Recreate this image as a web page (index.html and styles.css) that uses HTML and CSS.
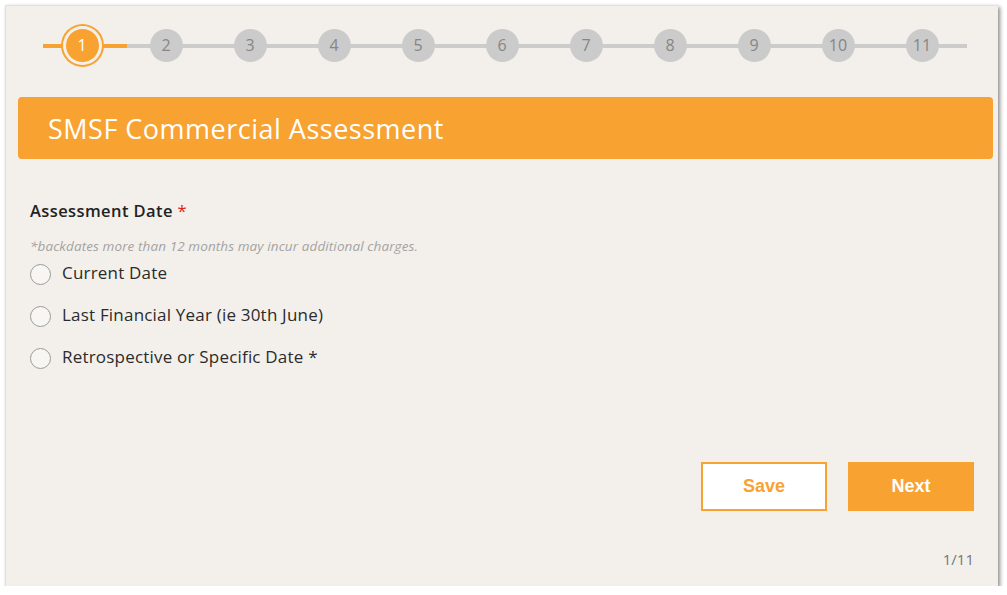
FILE: index.html
```html
<!DOCTYPE html>
<html>
<head>
<meta charset="utf-8">
<link rel="stylesheet" href="styles.css">
</head>
<body>
<div class="card">
  <div class="stepper">
    <div class="step active"><span class="dot">1</span></div>
    <div class="step"><span class="dot">2</span></div>
    <div class="step"><span class="dot">3</span></div>
    <div class="step"><span class="dot">4</span></div>
    <div class="step"><span class="dot">5</span></div>
    <div class="step"><span class="dot">6</span></div>
    <div class="step"><span class="dot">7</span></div>
    <div class="step"><span class="dot">8</span></div>
    <div class="step"><span class="dot">9</span></div>
    <div class="step"><span class="dot">10</span></div>
    <div class="step"><span class="dot">11</span></div>
  </div>
  <div class="banner"><h1>SMSF Commercial Assessment</h1></div>
  <div class="form">
    <div class="label">Assessment Date <span class="req">*</span></div>
    <div class="hint">*backdates more than 12 months may incur additional charges.</div>
    <div class="options">
      <label class="option"><span class="radio"></span>Current Date</label>
      <label class="option"><span class="radio"></span>Last Financial Year (ie 30th June)</label>
      <label class="option"><span class="radio"></span>Retrospective or Specific Date *</label>
    </div>
  </div>
  <div class="actions">
    <button class="btn save">Save</button>
    <button class="btn next">Next</button>
  </div>
  <div class="pager">1/11</div>
</div>
</body>
</html>
```
FILE: styles.css
```css
html, body { margin: 0; padding: 0; background: #ffffff; }
body { font-family: "Open Sans", "Liberation Sans", sans-serif; }
.card {
  margin: 5px 0 0 5px;
  width: 993px;
  height: 581px;
  background: #f3f0eb;
  box-shadow: 2px 2px 4px rgba(0,0,0,0.45);
  border-top: 1px solid #e2e0dc;
  border-left: 1px solid #e2e0dc;
  box-sizing: border-box;
  display: flex;
  flex-direction: column;
}
.stepper {
  position: relative;
  display: flex;
  padding: 17px 0 0 34px;
  height: 44px;
}
.stepper::before {
  content: "";
  position: absolute;
  left: 37px;
  top: 38px;
  width: 924px;
  height: 4px;
  background: #cccccc;
}
.stepper::after {
  content: "";
  position: absolute;
  left: 37px;
  top: 38px;
  width: 84px;
  height: 4px;
  background: #f8a231;
}
.step {
  position: relative;
  z-index: 1;
  width: 84px;
  height: 44px;
  display: flex;
  align-items: center;
  justify-content: center;
}
.dot {
  width: 33px;
  height: 33px;
  border-radius: 50%;
  background: #cbcbcb;
  color: #868686;
  font-size: 16px;
  display: flex;
  align-items: center;
  justify-content: center;
  line-height: 1;
}
.step.active .dot {
  background: #f8a231;
  color: #ffffff;
  box-shadow: 0 0 0 3px #f3f0eb, 0 0 0 5px #f8a231;
}
.banner {
  margin: 30px 5px 0 12px;
  height: 62px;
  background: #f8a231;
  border-radius: 4px;
  display: flex;
  align-items: center;
  padding-left: 30px;
}
.banner h1 {
  margin: 0;
  font-weight: 400;
  font-size: 27px;
  color: #ffffff;
  letter-spacing: 0.5px;
}
.form { padding: 41px 0 0 24px; }
.label {
  font-size: 16.5px;
  font-weight: 600;
  color: #222222;
  line-height: 22px;
  letter-spacing: 0.4px;
}
.req { color: #e02020; font-weight: 400; }
.hint {
  margin-top: 15px;
  font-size: 13.5px;
  font-style: italic;
  color: #a3a3a3;
  line-height: 18px;
  letter-spacing: 0.1px;
}
.options { display: flex; flex-direction: column; gap: 20px; margin-top: 7px; }
.option {
  display: flex;
  align-items: center;
  gap: 11px;
  font-size: 17px;
  color: #2b2b2b;
  line-height: 22px;
  height: 22px;
  letter-spacing: 0.2px;
}
.radio {
  width: 19px;
  height: 19px;
  border: 1px solid #9a9a9a;
  border-radius: 50%;
  background: #f7f6f3;
  margin-top: 3px;
  flex: none;
}
.actions {
  display: flex;
  justify-content: flex-end;
  gap: 21px;
  margin-top: auto;
  padding-right: 24px;
}
.btn {
  width: 126px;
  height: 49px;
  font-family: "Liberation Sans", Arial, sans-serif;
  font-weight: 700;
  font-size: 18px;
  border: 2px solid #f8a231;
  box-sizing: border-box;
  cursor: pointer;
}
.save { background: #ffffff; color: #f8a231; }
.next { background: #f8a231; color: #ffffff; }
.pager {
  text-align: right;
  padding: 38px 24px 17px 0;
  font-size: 15px;
  color: #777777;
  line-height: 20px;
}
```
